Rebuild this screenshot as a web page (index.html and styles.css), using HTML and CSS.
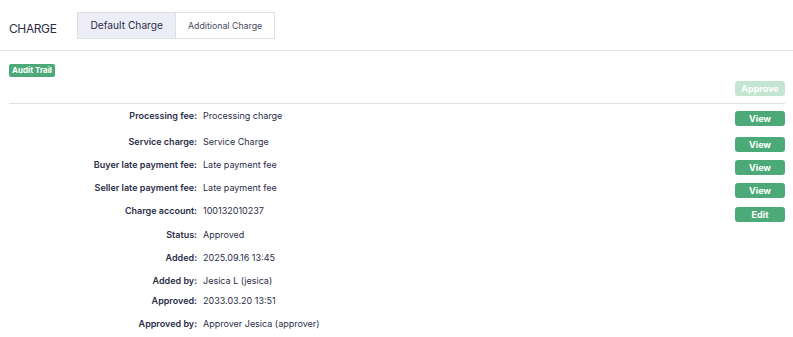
FILE: index.html
```html
<!DOCTYPE html>
<html lang="en">
<head>
<meta charset="UTF-8">
<meta name="viewport" content="width=device-width, initial-scale=1.0">
<title>Charge</title>
<link rel="stylesheet" href="styles.css">
</head>
<body>
<div class="page-header">
    <h1 class="page-title">CHARGE</h1>
    <div class="tabs">
        <a class="tab active">Default Charge</a>
        <a class="tab">Additional Charge</a>
    </div>
</div>
<div class="content">
    <span class="badge">Audit Trail</span>
    <div class="toolbar">
        <button class="btn btn-disabled">Approve</button>
    </div>
    <hr class="divider">
    <div class="details">
        <div class="row first">
            <span class="label">Processing fee:</span>
            <span class="value">Processing charge</span>
            <button class="btn">View</button>
        </div>
        <div class="row">
            <span class="label">Service charge:</span>
            <span class="value">Service Charge</span>
            <button class="btn">View</button>
        </div>
        <div class="row">
            <span class="label">Buyer late payment fee:</span>
            <span class="value">Late payment fee</span>
            <button class="btn">View</button>
        </div>
        <div class="row">
            <span class="label">Seller late payment fee:</span>
            <span class="value">Late payment fee</span>
            <button class="btn">View</button>
        </div>
        <div class="row tall">
            <span class="label">Charge account:</span>
            <span class="value">100132010237</span>
            <button class="btn btn-edit">Edit</button>
        </div>
        <div class="row">
            <span class="label">Status:</span>
            <span class="value">Approved</span>
        </div>
        <div class="row">
            <span class="label">Added:</span>
            <span class="value">2025.09.16 13:45</span>
        </div>
        <div class="row short">
            <span class="label">Added by:</span>
            <span class="value">Jesica L (jesica)</span>
        </div>
        <div class="row">
            <span class="label">Approved:</span>
            <span class="value">2033.03.20 13:51</span>
        </div>
        <div class="row">
            <span class="label">Approved by:</span>
            <span class="value">Approver Jesica (approver)</span>
        </div>
    </div>
</div>
</body>
</html>
```

FILE: styles.css
```css
* { box-sizing: border-box; }
body {
    margin: 0;
    font-family: Inter, "Noto Sans", sans-serif;
    color: #2b2e48;
    background: #fff;
}

/* header with tabs */
.page-header {
    display: flex;
    align-items: flex-start;
    height: 51px;
    padding: 12px 9px 0;
    border-bottom: 1px solid #e2e2e2;
}
.page-title {
    margin: 9px 21px 0 0;
    font-size: 12px;
    font-weight: 400;
    letter-spacing: -0.4px;
}
.tabs { display: flex; }
.tab {
    display: block;
    height: 27px;
    line-height: 25px;
    padding: 0 12px;
    border: 1px solid #dfe0e4;
    background: #fff;
    font-size: 8.8px;
    color: #4a4d5e;
}
.tab.active {
    background: #ecedf6;
    border-right: 0;
    font-size: 10.2px;
    color: #2b2e48;
}

/* body */
.content {
    display: flex;
    flex-direction: column;
    padding: 13px 8px 0 9px;
}
.badge {
    align-self: flex-start;
    height: 13px;
    line-height: 13px;
    padding: 0 3px;
    border-radius: 2px;
    background: #4caa78;
    color: #fff;
    font-size: 8px;
    font-weight: 700;
}
.toolbar {
    display: flex;
    justify-content: flex-end;
    margin-top: 4px;
}
.btn {
    width: 50px;
    height: 15px;
    padding: 0;
    border: 0;
    border-radius: 3px;
    background: #4caa78;
    color: #fff;
    font-family: Inter, "Noto Sans", sans-serif;
    font-size: 9px;
    font-weight: 700;
    line-height: 15px;
    text-align: center;
}
.btn-disabled { background: #c5e5d3; }
.divider {
    width: 100%;
    margin: 7px 0 0;
    border: 0;
    border-top: 1px solid #e0e0e0;
}

.details { font-size: 9px; }
.row {
    display: flex;
    align-items: flex-start;
    height: 23px;
    line-height: 14px;
}
.row.first { height: 26px; margin-top: 5px; }
.row.tall { height: 24px; }
.row.short { height: 20px; }
.label {
    width: 188px;
    text-align: right;
    font-weight: 600;
}
.value {
    flex: 1;
    padding-left: 6px;
}
.row .btn { margin-top: 2px; }
.row .btn-edit { margin-top: 3px; }
```
